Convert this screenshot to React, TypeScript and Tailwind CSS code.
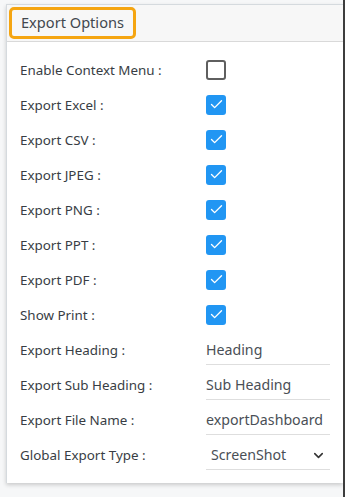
import { ChevronDown, Check } from "lucide-react";

const checks = [
  { label: "Enable Context Menu :", on: false },
  { label: "Export Excel :", on: true },
  { label: "Export CSV :", on: true },
  { label: "Export JPEG :", on: true },
  { label: "Export PNG :", on: true },
  { label: "Export PPT :", on: true },
  { label: "Export PDF :", on: true },
  { label: "Show Print :", on: true },
];

const inputs = [
  { label: "Export Heading :", value: "Heading" },
  { label: "Export Sub Heading :", value: "Sub Heading" },
  { label: "Export File Name :", value: "exportDashboard" },
];

export default function App() {
  return (
    <div
      className="w-[345px] h-[497px] bg-[#ececec] flex overflow-hidden"
      style={{ fontFamily: '"Noto Sans", "Open Sans", sans-serif' }}
    >
      <div className="flex-1 flex flex-col bg-[#f6f7f8] pl-[6px] pt-[4px]">
        <div className="bg-white border-l border-t border-[#d5dade] shadow-[0_2px_4px_rgba(0,0,0,0.18)]">
          {/* Header */}
          <div className="h-[37px] bg-[#f7f7f7] border-b border-[#d9d9d9] flex items-center pl-[2px]">
            <div className="h-[32px] px-[9px] flex items-center border-[3px] border-[#f5a511] rounded-[5px]">
              <span className="text-[14.6px] text-[#42474e]">Export Options</span>
            </div>
          </div>

          {/* Rows */}
          <div className="pt-[11px] pb-[10px] pl-[13px] pr-[12px]">
            {checks.map((c) => (
              <div key={c.label} className="h-[35px] flex items-center">
                <span className="w-[186px] text-[13.4px] text-[#383d44]">{c.label}</span>
                {c.on ? (
                  <span className="w-[20px] h-[20px] -mt-[2px] rounded-[3px] bg-[#2196f3] flex items-center justify-center">
                    <Check className="w-[15px] h-[15px] text-white" strokeWidth={2.2} />
                  </span>
                ) : (
                  <span className="w-[20px] h-[20px] -mt-[2px] rounded-[3px] border-2 border-[#5f5f5f]" />
                )}
              </div>
            ))}
            {inputs.map((i) => (
              <div key={i.label} className="h-[35px] flex items-center">
                <span className="w-[186px] text-[13.4px] text-[#383d44]">{i.label}</span>
                <div className="w-[124px] h-[28px] border-b border-[#dedede] flex items-center text-[14.2px] text-[#4a4f56]">
                  {i.value}
                </div>
              </div>
            ))}
            <div className="h-[35px] flex items-center">
              <span className="w-[186px] text-[13.4px] text-[#383d44]">Global Export Type :</span>
              <div className="w-[124px] h-[28px] border-b border-[#dedede] flex items-center justify-between pl-[5px] pr-[4px] text-[14.2px] text-[#4a4f56]">
                <span>ScreenShot</span>
                <ChevronDown className="w-[15px] h-[15px] text-[#333]" strokeWidth={2.5} />
              </div>
            </div>
          </div>
        </div>
      </div>
      <div className="w-[2px] bg-[#3d3d3d]" />
    </div>
  );
}
